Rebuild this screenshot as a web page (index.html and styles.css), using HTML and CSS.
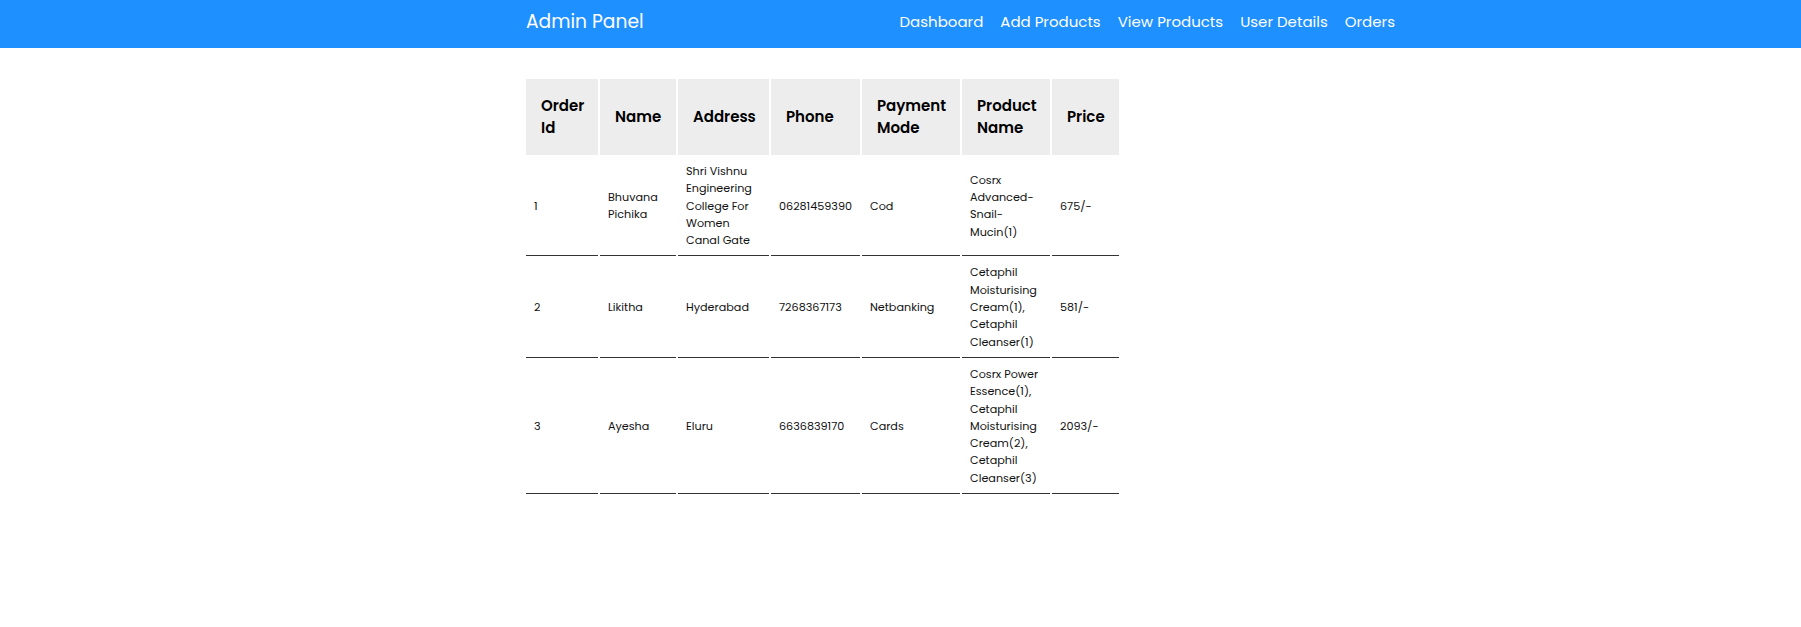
FILE: index.html
```html
<!DOCTYPE html>
<html lang="en">
<head>
<meta charset="utf-8">
<title>Admin Panel - Orders</title>
<link rel="stylesheet" href="styles.css">
</head>
<body>
<header class="navbar">
  <div class="nav-inner">
    <a class="brand" href="#">Admin Panel</a>
    <nav class="nav-links">
      <a href="#">Dashboard</a>
      <a href="#">Add Products</a>
      <a href="#">View Products</a>
      <a href="#">User Details</a>
      <a href="#">Orders</a>
    </nav>
  </div>
</header>
<main class="content">
  <table class="orders">
    <colgroup>
      <col class="c-id">
      <col class="c-name">
      <col class="c-addr">
      <col class="c-phone">
      <col class="c-pay">
      <col class="c-prod">
      <col class="c-price">
    </colgroup>
    <thead>
      <tr>
        <th>Order Id</th>
        <th>Name</th>
        <th>Address</th>
        <th>Phone</th>
        <th>Payment Mode</th>
        <th>Product Name</th>
        <th>Price</th>
      </tr>
    </thead>
    <tbody>
      <tr>
        <td>1</td>
        <td>Bhuvana Pichika</td>
        <td>Shri Vishnu Engineering College For Women Canal Gate</td>
        <td>06281459390</td>
        <td>Cod</td>
        <td>Cosrx Advanced-Snail-Mucin(1)</td>
        <td>675/-</td>
      </tr>
      <tr>
        <td>2</td>
        <td>Likitha</td>
        <td>Hyderabad</td>
        <td>7268367173</td>
        <td>Netbanking</td>
        <td>Cetaphil Moisturising Cream(1), Cetaphil Cleanser(1)</td>
        <td>581/-</td>
      </tr>
      <tr>
        <td>3</td>
        <td>Ayesha</td>
        <td>Eluru</td>
        <td>6636839170</td>
        <td>Cards</td>
        <td>Cosrx Power Essence(1), Cetaphil Moisturising Cream(2), Cetaphil Cleanser(3)</td>
        <td>2093/-</td>
      </tr>
    </tbody>
  </table>
</main>
</body>
</html>
```

FILE: styles.css
```css
* { box-sizing: border-box; }

body {
  margin: 0;
  font-family: "Poppins", "Open Sans", "DejaVu Sans", sans-serif;
  color: #000;
  background: #fff;
}

.navbar {
  background: #1e90ff;
  height: 48px;
}

.nav-inner {
  width: 869px;
  margin-left: 526px;
  height: 100%;
  display: flex;
  align-items: center;
  justify-content: space-between;
  padding-bottom: 4px;
}

.brand {
  color: #fff;
  text-decoration: none;
  font-size: 18.7px;
  line-height: 28px;
}

.nav-links {
  display: flex;
  gap: 17px;
}

.nav-links a {
  color: #fff;
  text-decoration: none;
  font-size: 15px;
  line-height: 24px;
}

.content {
  margin-left: 524px;
  padding-top: 29px;
}

.orders {
  border-spacing: 2px;
  table-layout: fixed;
  width: 597px;
}

.c-id { width: 72px; }
.c-name { width: 76px; }
.c-addr { width: 91px; }
.c-phone { width: 89px; }
.c-pay { width: 98px; }
.c-prod { width: 88px; }
.c-price { width: 67px; }

.orders th {
  background: #ededed;
  text-align: left;
  font-weight: 600;
  font-size: 15px;
  line-height: 22.5px;
  padding: 15px 15px;
  height: 76px;
  vertical-align: middle;
}

.orders td {
  font-size: 11.2px;
  line-height: 17.3px;
  padding: 6px 8px;
  border-bottom: 1px solid #333;
  vertical-align: middle;
  color: #111;
}
```
